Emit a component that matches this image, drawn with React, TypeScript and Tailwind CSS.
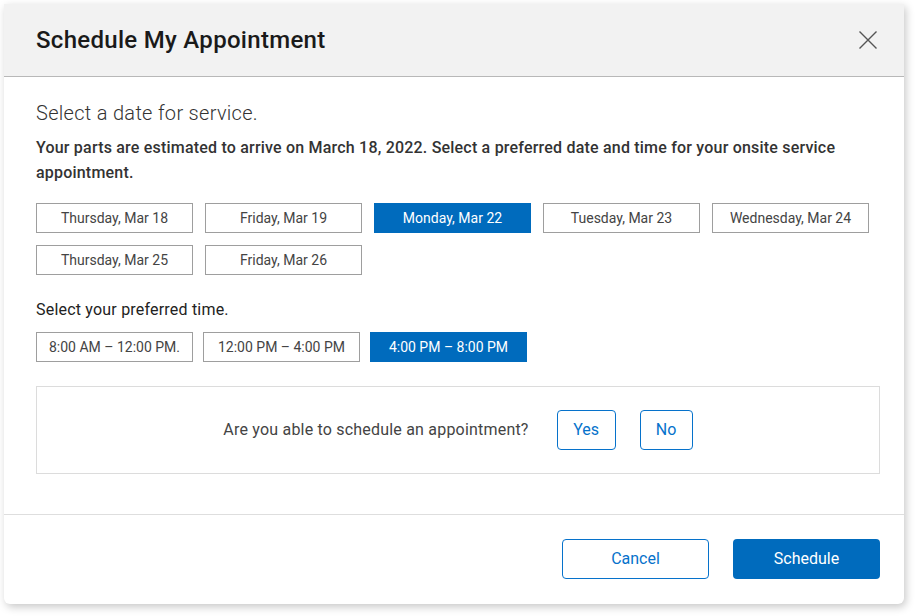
import React, { useState } from 'react';

const DATES = [
  'Thursday, Mar 18',
  'Friday, Mar 19',
  'Monday, Mar 22',
  'Tuesday, Mar 23',
  'Wednesday, Mar 24',
  'Thursday, Mar 25',
  'Friday, Mar 26',
];

const TIMES = ['8:00 AM – 12:00 PM.', '12:00 PM – 4:00 PM', '4:00 PM – 8:00 PM'];

const App: React.FC = () => {
  const [date, setDate] = useState('Monday, Mar 22');
  const [time, setTime] = useState('4:00 PM – 8:00 PM');

  return (
    <div className="min-h-screen bg-white p-1 font-['Roboto','Liberation_Sans',sans-serif]">
      <div className="w-[900px] h-[600px] bg-white rounded-b-md shadow-[2px_3px_9px_rgba(0,0,0,0.22)] flex flex-col">
        {/* Header */}
        <div className="h-[73px] shrink-0 bg-[#f2f2f2] border-b border-[#b8b8b8] flex items-center justify-between pl-8 pr-[27px]">
          <h2 className="text-[24px] font-medium tracking-[0.3px] text-[#1a1a1a]">Schedule My Appointment</h2>
          <button className="w-[18px] h-[18px] text-[#555]">
            <svg viewBox="0 0 18 18" className="w-[18px] h-[18px]" fill="none" stroke="currentColor" strokeWidth="1.4">
              <path d="M0.5 0.5 L17.5 17.5 M17.5 0.5 L0.5 17.5" />
            </svg>
          </button>
        </div>

        {/* Body */}
        <div className="flex-1 pl-8 pr-6 pt-[22px]">
          <h3 className="text-[20px] leading-7 font-light tracking-[0.3px] text-[#333]">Select a date for service.</h3>
          <p className="mt-[8px] text-[16px] leading-[25px] font-medium tracking-[0.2px] text-[#333]">
            Your parts are estimated to arrive on March 18, 2022. Select a preferred date and time for your onsite service appointment.
          </p>

          <div className="mt-[18px] grid grid-cols-[repeat(5,157px)] gap-3">
            {DATES.map((d) => (
              <button
                key={d}
                onClick={() => setDate(d)}
                className={`h-[30px] text-[14px] border ${
                  date === d
                    ? 'bg-[#006bbd] border-[#006bbd] text-white'
                    : 'bg-white border-[#9e9e9e] text-[#444]'
                }`}
              >
                {d}
              </button>
            ))}
          </div>

          <p className="mt-[23px] text-[16px] leading-6 tracking-[0.2px] text-[#222]">Select your preferred time.</p>
          <div className="mt-[10px] flex gap-[10px]">
            {TIMES.map((t) => (
              <button
                key={t}
                onClick={() => setTime(t)}
                className={`w-[157px] h-[30px] text-[14px] border ${
                  time === t
                    ? 'bg-[#006bbd] border-[#006bbd] text-white'
                    : 'bg-white border-[#9e9e9e] text-[#444]'
                }`}
              >
                {t}
              </button>
            ))}
          </div>

          <div className="mt-[24px] h-[88px] border border-[#dcdcdc] flex items-center justify-center">
            <span className="text-[16px] tracking-[0.2px] text-[#444]">Are you able to schedule an appointment?</span>
            <button className="ml-[28px] w-[59px] h-10 rounded border border-[#0672cb] text-[16px] text-[#0672cb]">
              Yes
            </button>
            <button className="ml-[24px] w-[53px] h-10 rounded border border-[#0672cb] text-[16px] text-[#0672cb]">
              No
            </button>
          </div>
        </div>

        {/* Footer */}
        <div className="h-[90px] shrink-0 border-t border-[#dedede] flex items-center justify-end gap-6 pr-6 pb-[2px]">
          <button className="w-[147px] h-10 rounded border border-[#0672cb] text-[16px] text-[#0672cb]">Cancel</button>
          <button className="w-[147px] h-10 rounded bg-[#006bbd] text-[16px] text-white">Schedule</button>
        </div>
      </div>
    </div>
  );
};

export default App;
